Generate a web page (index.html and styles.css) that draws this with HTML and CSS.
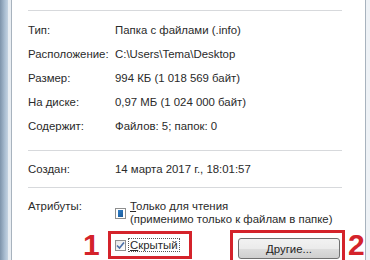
FILE: index.html
```html
<!DOCTYPE html>
<html lang="ru">
<head>
  <meta charset="UTF-8">
  <title>Свойства папки</title>
  <link rel="stylesheet" href="styles.css">
</head>
<body>

<div class="frame frame-left"></div>
<div class="dlg-edge"></div>

<div class="page">
  <div class="sep"></div>

  <div class="row"><span class="label">Тип:</span><span class="value">Папка с файлами (.info)</span></div>
  <div class="row"><span class="label">Расположение:</span><span class="value">C:\Users\Tema\Desktop</span></div>
  <div class="row"><span class="label">Размер:</span><span class="value">994 КБ (1 018 569 байт)</span></div>
  <div class="row"><span class="label">На диске:</span><span class="value">0,97 МБ (1 024 000 байт)</span></div>
  <div class="row"><span class="label">Содержит:</span><span class="value">Файлов: 5; папок: 0</span></div>

  <div class="sep sep-mid"></div>

  <div class="row"><span class="label">Создан:</span><span class="value">14 марта 2017 г., 18:01:57</span></div>

  <div class="sep sep-low"></div>

  <div class="attrs">
    <span class="label">Атрибуты:</span>
    <div class="option">
      <span class="check check-mixed"></span>
      <span class="option-text"><u>Т</u>олько для чтения<br>(применимо только к файлам в папке)</span>
    </div>
  </div>

  <div class="marks">
    <span class="num num-1">1</span>
    <div class="redbox redbox-1">
      <span class="check check-on">
        <svg width="9" height="9" viewBox="0 0 9 9"><path d="M1 4.5 L3.5 7 L8 1.5" fill="none" stroke="#4a6fa8" stroke-width="1.6"/></svg>
      </span>
      <span class="focus"><u>С</u>крытый</span>
    </div>
    <div class="redbox redbox-2">
      <button class="btn"><u>Д</u>ругие...</button>
    </div>
    <span class="num num-2">2</span>
  </div>
</div>

<div class="dlg-edge dlg-edge-right"></div>
<div class="frame frame-right"></div>

</body>
</html>
```

FILE: styles.css
```css
body {
  margin: 0;
  width: 370px;
  height: 260px;
  overflow: hidden;
  display: flex;
  font-family: 'Liberation Sans', Arial, sans-serif;
  font-size: 11.4px;
  color: #2a2a2a;
  background-color: #fff;
}

.frame {
  width: 8px;
  flex: none;
  background: linear-gradient(to bottom, #b6c8da, #93a9bf 60%, #8aa0b6);
}

.frame-left {
  background: linear-gradient(to right, #7d93aa, #a9bdd1 60%, #c4d3e2);
}

.frame-right {
  background: linear-gradient(to bottom, #c9d7e5 0, #c9d7e5 22px, #9fb4c9 24px, #8fa5bb);
}

.dlg-edge {
  width: 3px;
  flex: none;
  background-color: #e8edf2;
}

.dlg-edge-right {
  width: 9px;
  background-color: #eef2f6;
}

.page {
  flex: 1;
  border-left: 1px solid #a8b3be;
  border-right: 1px solid #a8b3be;
  padding: 10px 0 0 16px;
  background-color: #fff;
}

.sep {
  height: 1px;
  width: 314px;
  background-color: #d7d9dc;
  margin-bottom: 7px;
}

.sep-mid {
  margin-top: 12px;
  margin-bottom: 6px;
}

.sep-low {
  margin-top: 6px;
  margin-bottom: 12px;
}

.row {
  display: flex;
  height: 24px;
  line-height: 24px;
}

.label {
  width: 87px;
  flex: none;
}

.attrs {
  display: flex;
  line-height: 13px;
}

.option {
  display: flex;
  align-items: center;
  gap: 4px;
}

.check {
  width: 11px;
  height: 11px;
  box-sizing: border-box;
  border: 1px solid #8f8f8f;
  background: linear-gradient(135deg, #e6e6e6, #fff);
  display: inline-flex;
  align-items: center;
  justify-content: center;
  flex: none;
}

.check-mixed {
  padding: 2px;
  background: #fff;
  border-color: #8e8f8f;
}

.check-mixed::after {
  content: "";
  display: block;
  width: 7px;
  height: 7px;
  background: linear-gradient(135deg, #2f7fc9, #1c5a98);
}

.marks {
  display: flex;
  align-items: flex-start;
  margin-top: 4px;
  height: 31px;
}

.num {
  color: #d4232b;
  font-weight: bold;
  font-size: 30px;
  line-height: 26px;
  height: 26px;
  margin-top: 2px;
}

.num-1 {
  margin-left: 55px;
  width: 25px;
}

.num-2 {
  margin-left: 3px;
}

.redbox {
  border: 3px solid #d4232b;
  box-sizing: border-box;
  height: 32px;
}

.redbox-1 {
  width: 84px;
  height: 28px;
  margin-top: 1px;
  display: flex;
  align-items: center;
  gap: 3px;
  padding-left: 4px;
}

.redbox-2 {
  width: 115px;
  margin-left: 38px;
  padding: 5px 0 0 5px;
  border-bottom: none;
}

.focus {
  outline: 1px dotted #555;
  line-height: 12px;
  padding: 0 1px;
}

.btn {
  width: 102px;
  height: 21px;
  font-family: inherit;
  font-size: 11.4px;
  color: #1e1e1e;
  border: 1px solid #707070;
  border-radius: 3px;
  background: linear-gradient(to bottom, #f2f2f2 0, #ebebeb 50%, #dddddd 51%, #cfcfcf 100%);
  padding: 0;
}
```
